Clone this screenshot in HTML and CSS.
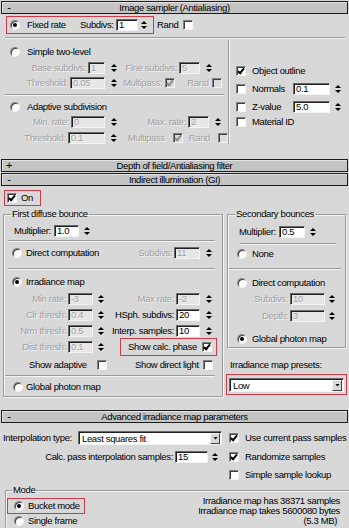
FILE: index.html
```html
<!DOCTYPE html>
<html lang="en">
<head>
  <meta charset="UTF-8" />
  <title>Image sampler / Indirect illumination</title>
  <link rel="stylesheet" href="styles.css">
</head>
<body>
<div class="panel">

  <div class="bar"><span class="sign">-</span><span class="bar-title">Image sampler (Antialiasing)</span><span></span></div>

  <div class="sampler">
    <div class="fixed-row">
      <div class="mark fixed-box">
        <span class="radio on"></span>
        <span class="lbl fixed-lbl">Fixed rate</span>
        <span class="lbl subdivs-lbl">Subdivs:</span>
        <span class="field w22">1</span>
        <span class="arrows near"></span>
      </div>
      <span class="lbl rand-lbl">Rand</span>
      <span class="check"></span>
    </div>
    <div class="groove sampler-line"></div>

    <div class="sampler-body">
      <div class="sampler-left">
        <div class="row opt opt-simple"><span class="radio"></span><span class="lbl">Simple two-level</span></div>
        <div class="row r-base">
          <div class="cell cell-a"><span class="lbl dis">Base subdivs:</span><span class="field dis w17">1</span><span class="arrows"></span></div>
          <div class="cell cell-b"><span class="lbl dis">Fine subdivs:</span><span class="field dis w21">5</span><span class="arrows"></span></div>
        </div>
        <div class="row r-thresh1">
          <div class="cell cell-a"><span class="lbl dis">Threshold:</span><span class="field dis w35">0.05</span><span class="arrows"></span></div>
          <div class="cell-mp">
            <span class="lbl dis">Multipass:</span><span class="check dis on mp-check"></span>
            <span class="lbl dis mp-rand">Rand</span><span class="check dis rand-check"></span>
          </div>
        </div>
        <div class="groove left-line"></div>
        <div class="row opt opt-adapt"><span class="radio"></span><span class="lbl">Adaptive subdivision</span></div>
        <div class="row r-min">
          <div class="cell cell-a"><span class="lbl dis">Min. rate:</span><span class="field dis w34">0</span><span class="arrows"></span></div>
          <div class="cell cell-b2"><span class="lbl dis">Max. rate:</span><span class="field dis w21">2</span><span class="arrows"></span></div>
        </div>
        <div class="row r-thresh2">
          <div class="cell cell-a"><span class="lbl dis">Threshold:</span><span class="field dis w37">0.1</span><span class="arrows"></span></div>
          <div class="cell-mp2">
            <span class="lbl dis">Multipass</span><span class="check dis on mp2-check"></span>
            <span class="lbl dis mp2-rand">Rand</span><span class="check dis rand2-check"></span>
          </div>
        </div>
      </div>

      <div class="sampler-right">
        <div class="row r-outline"><span class="check on"></span><span class="lbl">Object outline</span></div>
        <div class="row r-normals"><span class="check"></span><span class="lbl side-lbl">Normals</span><span class="field w37">0.1</span><span class="arrows side-arrows"></span></div>
        <div class="row r-z"><span class="check"></span><span class="lbl side-lbl">Z-value</span><span class="field w37">5.0</span><span class="arrows side-arrows"></span></div>
        <div class="row r-mat"><span class="check"></span><span class="lbl">Material ID</span></div>
      </div>
    </div>
  </div>

  <div class="bar"><span class="sign">+</span><span class="bar-title">Depth of field/Antialiasing filter</span><span></span></div>
  <div class="bar bar-gi"><span class="sign">-</span><span class="bar-title">Indirect illumination (GI)</span><span></span></div>

  <div class="gi">
    <div class="mark on-box"><span class="check on"></span><span class="lbl">On</span></div>

    <div class="gi-groups">
      <fieldset class="first">
        <legend>First diffuse bounce</legend>
        <div class="row r-mult1"><span class="lbl mult-lbl">Multiplier:</span><span class="field w25">1.0</span><span class="arrows mult-arrows"></span></div>
        <div class="groove g1"></div>
        <div class="row r-direct">
          <span class="radio"></span><span class="lbl">Direct computation</span>
          <div class="cell cell-gb push"><span class="lbl dis">Subdivs:</span><span class="field dis w26">11</span><span class="arrows"></span></div>
        </div>
        <div class="groove g2"></div>
        <div class="row r-irr"><span class="radio on"></span><span class="lbl">Irradiance map</span></div>
        <div class="row prm prm-first">
          <div class="cell cell-ga"><span class="lbl dis">Min rate:</span><span class="field dis w25">-3</span><span class="arrows ga-arrows"></span></div>
          <div class="cell cell-gb"><span class="lbl dis">Max rate:</span><span class="field dis w24">-2</span><span class="arrows"></span></div>
        </div>
        <div class="row prm">
          <div class="cell cell-ga"><span class="lbl dis">Clr thresh:</span><span class="field dis w25">0.4</span><span class="arrows ga-arrows"></span></div>
          <div class="cell cell-gb"><span class="lbl">HSph. subdivs:</span><span class="field w24">20</span><span class="arrows"></span></div>
        </div>
        <div class="row prm">
          <div class="cell cell-ga"><span class="lbl dis">Nrm thresh:</span><span class="field dis w25">0.5</span><span class="arrows ga-arrows"></span></div>
          <div class="cell cell-gb"><span class="lbl">Interp. samples:</span><span class="field w24">10</span><span class="arrows"></span></div>
        </div>
        <div class="row prm">
          <div class="cell cell-ga"><span class="lbl dis">Dist thresh:</span><span class="field dis w25">0.1</span><span class="arrows ga-arrows"></span></div>
          <div class="mark calc-box"><span class="lbl">Show calc. phase</span><span class="check on"></span></div>
        </div>
        <div class="row r-show">
          <span class="lbl show-a">Show adaptive</span><span class="check show-a-check"></span>
          <span class="lbl show-d">Show direct light</span><span class="check show-d-check"></span>
        </div>
        <div class="groove g3"></div>
        <div class="row r-gpm"><span class="radio"></span><span class="lbl">Global photon map</span></div>
      </fieldset>

      <div class="gi-right">
        <fieldset class="second">
          <legend>Secondary bounces</legend>
          <div class="row r-mult2"><span class="lbl mult-lbl">Multiplier:</span><span class="field w26">0.5</span><span class="arrows mult-arrows"></span></div>
          <div class="groove g4"></div>
          <div class="row r-none"><span class="radio"></span><span class="lbl">None</span></div>
          <div class="groove g5"></div>
          <div class="row r-direct2"><span class="radio"></span><span class="lbl">Direct computation</span></div>
          <div class="row r-sub2 cell"><span class="lbl dis">Subdivs:</span><span class="field dis w35">10</span><span class="arrows sec-arrows"></span></div>
          <div class="row r-depth cell"><span class="lbl dis">Depth:</span><span class="field dis w35">3</span><span class="arrows sec-arrows"></span></div>
          <div class="row r-gpm2"><span class="radio on"></span><span class="lbl">Global photon map</span></div>
        </fieldset>
        <div class="row presets-lbl"><span class="lbl">Irradiance map presets:</span></div>
        <div class="mark presets-box">
          <div class="select"><span class="value">Low</span><span class="drop"></span></div>
        </div>
      </div>
    </div>
  </div>

  <div class="bar bar-adv"><span class="sign">-</span><span class="bar-title">Advanced irradiance map parameters</span><span></span></div>

  <div class="adv">
    <div class="row r-interp">
      <span class="lbl interp-lbl">Interpolation type:</span>
      <div class="select interp"><span class="value">Least squares fit</span><span class="drop"></span></div>
      <span class="check on adv-check"></span><span class="lbl adv-lbl">Use current pass samples</span>
    </div>
    <div class="row r-calc">
      <div class="cell calc-cell"><span class="lbl">Calc. pass interpolation samples:</span><span class="field w33">15</span><span class="arrows calc-arrows"></span></div>
      <span class="check on adv-check2"></span><span class="lbl adv-lbl">Randomize samples</span>
    </div>
    <div class="row r-simple"><span class="check"></span><span class="lbl adv-lbl">Simple sample lookup</span></div>

    <fieldset class="mode">
      <legend>Mode</legend>
      <div class="mode-body">
        <div class="mode-left">
          <div class="mark bucket-box"><span class="radio on"></span><span class="lbl">Bucket mode</span></div>
          <div class="row r-single"><span class="radio"></span><span class="lbl">Single frame</span></div>
        </div>
        <div class="info">
          <div>Irradiance map has 38371 samples</div>
          <div>Irradiance map takes 5600080 bytes</div>
          <div class="info-mb">(5.3 MB)</div>
        </div>
      </div>
    </fieldset>
  </div>

</div>
</body>
</html>
```

FILE: styles.css
```css
body {
  margin: 0;
  background-color: #d8d8d8;
  font-family: "Liberation Sans", Arial, sans-serif;
  font-size: 9.5px;
  letter-spacing: -0.35px;
  color: #000;
}

.panel {
  width: 349px;
  height: 528px;
  padding-top: 1px;
  box-sizing: border-box;
  overflow: hidden;
}

/* rollout title bars */
.bar {
  display: grid;
  grid-template-columns: 14px 1fr 14px;
  align-items: center;
  height: 11px;
  margin: 0 1px;
  border: 1px solid #1c1c1c;
  background-color: #c4c4c4;
  line-height: 11px;
  box-shadow: inset 1px 1px 0 #e4e4e4;
}

.bar .sign { text-align: center; font-size: 11px; }
.bar-title { text-align: center; white-space: nowrap; }
.bar-gi { margin-top: 1px; }
.bar-adv { margin-top: 13px; }

/* common controls */
.lbl { white-space: nowrap; line-height: 12px; }
.dis { color: #a2a2a2; text-shadow: 1px 1px 0 #f2f2f2; }

.row {
  display: flex;
  align-items: center;
  height: 14px;
}

.cell {
  display: flex;
  align-items: center;
  justify-content: flex-end;
}

.mark {
  display: flex;
  align-items: center;
  box-sizing: border-box;
  border: 1px solid #cf3a48;
}

.radio {
  position: relative;
  flex: none;
  width: 10px;
  height: 10px;
  box-sizing: border-box;
  border-radius: 50%;
  background: #fff;
  border: 1px solid;
  border-color: #808080 #f4f4f4 #f4f4f4 #808080;
  box-shadow: inset 1px 1px 0 #404040;
}

.radio.on::after {
  content: "";
  position: absolute;
  left: 2px;
  top: 2px;
  width: 4px;
  height: 4px;
  border-radius: 50%;
  background: #000;
}

.check {
  position: relative;
  flex: none;
  width: 10px;
  height: 10px;
  box-sizing: border-box;
  background: #fff;
  border: 1px solid;
  border-color: #808080 #f4f4f4 #f4f4f4 #808080;
  box-shadow: inset 1px 1px 0 #404040;
}

.check.on::after {
  content: "";
  position: absolute;
  left: 2px;
  top: 0;
  width: 2px;
  height: 5px;
  border: solid #000;
  border-width: 0 2px 2px 0;
  transform: rotate(40deg);
}

.check.dis { background: #dcdcdc; }
.check.dis.on::after { border-color: #8c8c8c; }

.field {
  flex: none;
  height: 12px;
  box-sizing: border-box;
  margin-left: 2px;
  padding-left: 2px;
  background: #fff;
  border: 1px solid;
  border-color: #6a6a6a #f4f4f4 #f4f4f4 #6a6a6a;
  box-shadow: inset 1px 1px 0 #202020;
  line-height: 10px;
  overflow: hidden;
}

.field.dis { background: #e6e6e6; }

.w17 { width: 17px; }
.w21 { width: 21px; }
.w22 { width: 22px; }
.w24 { width: 24px; }
.w25 { width: 25px; }
.w26 { width: 26px; }
.w33 { width: 33px; }
.w34 { width: 34px; }
.w35 { width: 35px; }
.w37 { width: 37px; }

.arrows {
  position: relative;
  flex: none;
  width: 6px;
  height: 12px;
  margin-left: 6px;
}

.arrows::before,
.arrows::after {
  content: "";
  position: absolute;
  left: 0;
  width: 6px;
  height: 3px;
  background: #000;
}

.arrows::before { top: 2px; clip-path: polygon(50% 0, 100% 100%, 0 100%); }
.arrows::after { bottom: 2px; clip-path: polygon(0 0, 100% 0, 50% 100%); }

.groove {
  border-top: 1px solid #9c9c9c;
  border-bottom: 1px solid #f4f4f4;
}

.select {
  display: flex;
  align-items: center;
  height: 14px;
  box-sizing: border-box;
  background: #fff;
  border: 1px solid;
  border-color: #6a6a6a #f4f4f4 #f4f4f4 #6a6a6a;
  box-shadow: inset 1px 1px 0 #202020;
}

.select .value { flex: 1; padding-left: 3px; white-space: nowrap; }

.drop {
  position: relative;
  flex: none;
  width: 10px;
  height: 11px;
  margin-right: 1px;
  box-sizing: border-box;
  background: #d8d8d8;
  border: 1px solid;
  border-color: #f4f4f4 #404040 #404040 #f4f4f4;
}

.drop::after {
  content: "";
  position: absolute;
  left: 2px;
  top: 3px;
  width: 5px;
  height: 3px;
  background: #000;
  clip-path: polygon(0 0, 100% 0, 50% 100%);
}

fieldset {
  min-width: 0;
  margin: 0;
  padding: 0;
  box-sizing: border-box;
  border: 1px solid #9c9c9c;
  box-shadow: inset 1px 1px 0 #f4f4f4, 1px 1px 0 #f4f4f4;
}

legend {
  margin-left: 7px;
  padding: 0 1px;
  line-height: 12px;
}

/* image sampler */
.sampler { height: 143px; }

.fixed-row {
  display: flex;
  align-items: center;
  height: 18px;
  margin: 2px 0 0 6px;
}

.fixed-box { width: 148px; height: 18px; }
.fixed-box .radio { margin-left: 3px; }
.fixed-lbl { width: 52px; margin-left: 7px; }
.subdivs-lbl { width: 35px; margin-left: 1px; }
.fixed-box .field { margin-left: 1px; }
.arrows.near { margin-left: 3px; }
.rand-lbl { width: 26px; margin-left: 3px; }

.sampler-line { margin: 3px 4px 0 5px; }

.sampler-body {
  display: flex;
  margin-top: 1px;
}

.sampler-left {
  width: 229px;
  height: 104px;
  box-sizing: border-box;
  border-right: 1px solid #9c9c9c;
  box-shadow: 1px 0 0 #f4f4f4;
}

.opt { padding-left: 10px; }
.opt .lbl { margin-left: 7px; }
.opt-simple { margin-top: 5px; }
.r-base { margin-top: 2px; }
.r-thresh1 { margin-top: 1px; }
.left-line { margin: 4px 4px 0 5px; }
.opt-adapt { margin-top: 4px; }
.r-min { margin-top: 1px; }
.r-thresh2 { margin-top: 2px; }

.cell-a { width: 117px; }
.cell-b { width: 95px; }
.cell-b2 { width: 104px; }

.cell-mp, .cell-mp2 {
  display: flex;
  align-items: center;
}

.cell-mp { padding-left: 6px; }
.mp-check { margin-left: 3px; }
.mp-rand { margin-left: 12px; }
.rand-check { margin-left: 3px; }

.cell-mp2 { padding-left: 11px; }
.mp2-check { margin-left: 8px; }
.mp2-rand { margin-left: 6px; }
.rand2-check { margin-left: 8px; }

.sampler-right { padding-left: 7px; }
.sampler-right .check + .lbl { margin-left: 6px; }
.r-outline { margin-top: 24px; }
.r-normals { margin-top: 4px; }
.r-z { margin-top: 4px; }
.r-mat { margin-top: 1px; }
.side-lbl { width: 39px; }
.side-arrows { margin-left: 5px; }

/* indirect illumination */
.on-box {
  width: 37px;
  height: 16px;
  margin: 4px 0 0 4px;
}

.on-box .check { margin-left: 2px; }
.on-box .lbl { margin-left: 4px; }

.gi-groups {
  display: flex;
  margin-top: 2px;
  padding-left: 3px;
}

.first { width: 220px; padding-bottom: 2px; }

.r-mult1 { margin-top: 4px; padding-left: 10px; }
.mult-lbl { width: 38px; }
.mult-arrows { margin-left: 5px; }
.g1 { margin: 2px 7px 0 4px; }

.r-direct { margin-top: 4px; padding: 0 10px 0 8px; }
.r-direct > .lbl { margin-left: 4px; }
.push { margin-left: auto; }
.g2 { margin: 8px 7px 0 4px; }

.r-irr { margin-top: 5px; padding-left: 8px; }
.r-irr .lbl { margin-left: 4px; }

.prm { height: 16px; }
.prm-first { margin-top: 2px; }
.cell-ga { width: 100px; }
.cell-gb { width: 108px; }
.ga-arrows { margin-left: 5px; }

.calc-box {
  width: 97px;
  height: 18px;
  margin: -1px 0 -1px 16px;
}

.calc-box .lbl { padding-left: 7px; }
.calc-box .check { margin: 0 4px 0 auto; }

.r-show { margin-top: 3px; padding-left: 25px; }
.show-a { width: 64px; }
.show-a-check { margin-left: 4px; }
.show-d { width: 66px; margin-left: 28px; }
.show-d-check { margin-left: 2px; }
.g3 { margin: 3px 7px 0 1px; }

.r-gpm { margin-top: 3px; padding-left: 9px; }
.r-gpm .lbl { margin-left: 3px; }

.gi-right {
  width: 119px;
  margin-left: 4px;
}

.second { width: 119px; padding-bottom: 1px; }

.r-mult2 { margin-top: 5px; padding-left: 11px; }
.g4 { margin: 4px 9px 0 12px; }
.r-none { margin-top: 2px; padding-left: 9px; }
.r-none .lbl, .r-direct2 .lbl, .r-gpm2 .lbl { margin-left: 5px; }
.g5 { margin: 7px 4px 0 1px; }
.r-direct2 { margin-top: 6px; padding-left: 9px; }
.r-sub2 { margin-top: 2px; padding-right: 10px; }
.r-depth { margin-top: 3px; padding-right: 10px; }
.sec-arrows { margin-left: 4px; }
.r-gpm2 { margin-top: 9px; padding-left: 9px; }

.presets-lbl { margin-top: 10px; padding-left: 3px; }

.presets-box {
  display: block;
  width: 121px;
  height: 21px;
  margin: 2px 0 0 -1px;
  padding: 3px 2px 0 2px;
}

/* advanced irradiance map parameters */
.r-interp { margin-top: 8px; padding-left: 3px; }
.interp-lbl { width: 75px; }
.select.interp { width: 144px; }
.adv-check { margin-left: 7px; }
.adv-lbl { margin-left: 6px; }

.r-calc { margin-top: 5px; }
.calc-cell { width: 218px; }
.calc-arrows { margin-left: 4px; }
.adv-check2 { margin-left: 11px; }

.r-simple { margin-top: 4px; padding-left: 229px; }

.mode {
  width: 350px;
  height: 60px;
  margin: 2px 0 0 5px;
}

.mode legend { margin-left: 6px; }

.mode-body {
  display: flex;
  justify-content: space-between;
}

.bucket-box {
  width: 78px;
  height: 16px;
  margin: 2px 0 0 1px;
}

.bucket-box .radio { margin-left: 6px; }
.bucket-box .lbl, .r-single .lbl { margin-left: 4px; }
.r-single { padding-left: 8px; }

.info {
  padding-right: 14px;
  text-align: right;
  line-height: 10px;
  white-space: nowrap;
}

.info-mb { padding-right: 3px; }
```
